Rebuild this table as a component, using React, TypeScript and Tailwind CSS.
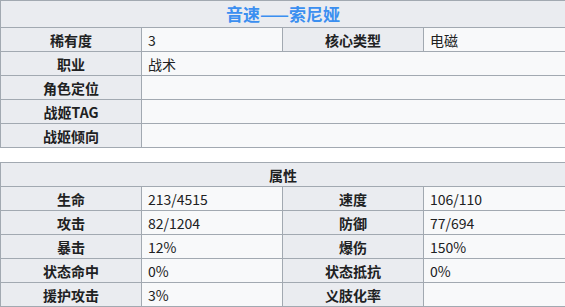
import React from "react";

const info: [string, string][] = [
  ["职业", "战术"],
  ["角色定位", ""],
  ["战姬TAG", ""],
  ["战姬倾向", ""],
];

const stats: [string, string, string, string][] = [
  ["生命", "213/4515", "速度", "106/110"],
  ["攻击", "82/1204", "防御", "77/694"],
  ["暴击", "12%", "爆伤", "150%"],
  ["状态命中", "0%", "状态抵抗", "0%"],
  ["援护攻击", "3%", "义肢化率", ""],
];

const th = "border border-[#a2a9b1] bg-[#eaecf0] text-center font-bold h-[24px] p-0";
const td = "border border-[#a2a9b1] bg-[#f8f9fa] text-left pl-[6px] h-[24px] p-0";

const App: React.FC = () => {
  return (
    <div
      className="w-[565px] bg-white text-[14px] leading-[22px] text-[#202122]"
      style={{ fontFamily: '"Noto Sans CJK SC", "Noto Sans", sans-serif' }}
    >
      {/* basic info */}
      <table className="w-[565px] table-fixed border-collapse">
        <colgroup>
          <col className="w-[141px]" />
          <col className="w-[141px]" />
          <col className="w-[141px]" />
          <col className="w-[142px]" />
        </colgroup>
        <tbody>
          <tr>
            <th colSpan={4} className="border border-[#a2a9b1] bg-[#eaecf0] h-[27px] p-0 text-center text-[17px] font-bold text-[#3b8ff0]">
              音速——索尼娅
            </th>
          </tr>
          <tr>
            <th className={th}>稀有度</th>
            <td className={td}>3</td>
            <th className={th}>核心类型</th>
            <td className={td}>电磁</td>
          </tr>
          {info.map(([k, v]) => (
            <tr key={k}>
              <th className={th}>{k}</th>
              <td colSpan={3} className={td}>{v}</td>
            </tr>
          ))}
        </tbody>
      </table>

      {/* stats */}
      <table className="mt-[14px] w-[565px] table-fixed border-collapse">
        <colgroup>
          <col className="w-[141px]" />
          <col className="w-[141px]" />
          <col className="w-[141px]" />
          <col className="w-[142px]" />
        </colgroup>
        <tbody>
          <tr>
            <th colSpan={4} className={th}>属性</th>
          </tr>
          {stats.map(([a, b, c, d]) => (
            <tr key={a}>
              <th className={th}>{a}</th>
              <td className={td}>{b}</td>
              <th className={th}>{c}</th>
              <td className={td}>{d}</td>
            </tr>
          ))}
        </tbody>
      </table>
    </div>
  );
};

export default App;
